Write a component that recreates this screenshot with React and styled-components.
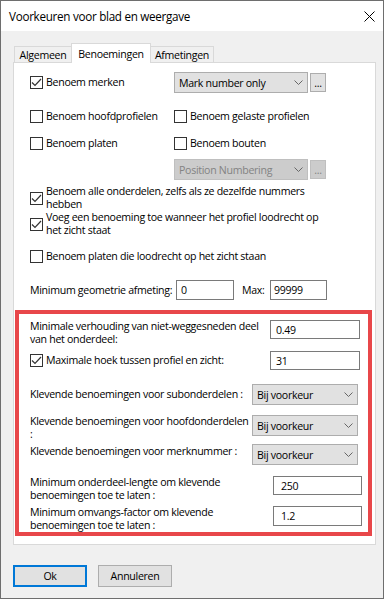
import React from 'react';
import styled, { createGlobalStyle } from 'styled-components';

const GlobalStyle = createGlobalStyle`
  body {
    margin: 0;
    background: #ffffff;
  }
`;

const Window = styled.div`
  width: 384px;
  height: 599px;
  box-sizing: border-box;
  border: 1px solid #6e6e6e;
  background: #f0f0f0;
  display: flex;
  flex-direction: column;
  font-family: "Open Sans", "Noto Sans", sans-serif;
  font-size: 10.6px;
  letter-spacing: -0.3px;
  color: #000000;
`;

const TitleBar = styled.div`
  flex: none;
  height: 30px;
  background: #ffffff;
  display: flex;
  align-items: center;
  justify-content: space-between;
  padding: 0 8px 0 8px;
`;

const Title = styled.span`
  font-size: 11.7px;
`;

const Body = styled.div`
  flex: 1;
  display: flex;
  flex-direction: column;
  padding: 12px 0 0 12px;
`;

const TabStrip = styled.div`
  display: flex;
  align-items: flex-end;
  height: 19px;
  padding-left: 1px;
`;

const Tab = styled.div`
  box-sizing: border-box;
  width: ${(p) => p.$w}px;
  height: ${(p) => (p.$active ? 20 : 16)}px;
  margin-left: ${(p) => (p.$first ? 0 : -1)}px;
  margin-bottom: ${(p) => (p.$active ? -1 : 0)}px;
  border: 1px solid #d9d9d9;
  border-bottom: none;
  background: ${(p) => (p.$active ? '#ffffff' : '#f0f0f0')};
  display: flex;
  align-items: center;
  justify-content: center;
  position: relative;
  z-index: ${(p) => (p.$active ? 2 : 1)};
`;

const Panel = styled.div`
  box-sizing: border-box;
  width: 363px;
  height: 483px;
  border: 1px solid #d9d9d9;
  background: #ffffff;
  display: flex;
  flex-direction: column;
  padding-top: 9px;
`;

const Section = styled.div`
  display: flex;
  flex-direction: column;
  padding-left: 16px;
`;

const Row = styled.div`
  display: flex;
  align-items: center;
  height: ${(p) => p.$h}px;
  margin-top: ${(p) => p.$mt || 0}px;
  padding-left: ${(p) => p.$indent || 0}px;
`;

const Check = styled.div`
  display: flex;
  align-items: center;
  gap: 3px;
  width: ${(p) => (p.$w ? `${p.$w}px` : 'auto')};
  flex: none;
  line-height: 13px;
`;

const Label = styled.div`
  flex: none;
  width: ${(p) => (p.$w ? `${p.$w}px` : 'auto')};
  line-height: 13px;
  margin-top: ${(p) => p.$mt || 0}px;
  margin-left: ${(p) => p.$ml || 0}px;
  white-space: nowrap;
`;

const Select = styled.div`
  box-sizing: border-box;
  flex: none;
  width: ${(p) => p.$w}px;
  height: 21px;
  border: 1px solid ${(p) => (p.$disabled ? '#bfbfbf' : '#adadad')};
  background: ${(p) => (p.$disabled ? '#cccccc' : '#e1e1e1')};
  color: ${(p) => (p.$disabled ? '#838383' : '#000000')};
  display: flex;
  align-items: center;
  justify-content: space-between;
  padding: 0 4px 0 4px;
`;

const Dots = styled.div`
  box-sizing: border-box;
  flex: none;
  width: 16px;
  height: 19px;
  margin-left: 2px;
  border: 1px solid ${(p) => (p.$disabled ? '#bfbfbf' : '#adadad')};
  background: ${(p) => (p.$disabled ? '#cccccc' : '#e1e1e1')};
  color: ${(p) => (p.$disabled ? '#838383' : '#000000')};
  display: flex;
  align-items: flex-end;
  justify-content: center;
  padding-bottom: 3px;
  line-height: 10px;
`;

const Input = styled.div`
  box-sizing: border-box;
  flex: none;
  width: ${(p) => p.$w}px;
  height: ${(p) => p.$h || 20}px;
  border: 1px solid #7a7a7a;
  background: #ffffff;
  display: flex;
  align-items: center;
  padding-left: ${(p) => p.$pl || 5}px;
`;

const RedBox = styled.div`
  box-sizing: border-box;
  width: 357px;
  height: 226px;
  margin: 10px 0 0 1px;
  border: 4px solid #e8474a;
  display: flex;
  flex-direction: column;
  padding-left: 11px;
`;

const RedRow = styled.div`
  display: flex;
  align-items: ${(p) => p.$align || 'flex-start'};
  justify-content: space-between;
  margin-top: ${(p) => p.$mt}px;
  padding-right: ${(p) => p.$pr}px;
`;

const ButtonRow = styled.div`
  display: flex;
  gap: 11px;
  margin-top: 20px;
`;

const Button = styled.div`
  box-sizing: border-box;
  width: 74px;
  height: 22px;
  border: ${(p) => (p.$default ? '2px solid #0078d7' : '1px solid #adadad')};
  background: #e1e1e1;
  display: flex;
  align-items: center;
  justify-content: center;
`;

const CloseIcon = () => (
  <svg width="11" height="11" viewBox="0 0 11 11">
    <path d="M0.5 0.5 L10.5 10.5 M10.5 0.5 L0.5 10.5" stroke="#000" strokeWidth="1" fill="none" />
  </svg>
);

const Chevron = () => (
  <svg width="9" height="5" viewBox="0 0 9 5">
    <polyline points="0.5,0.5 4.5,4.5 8.5,0.5" stroke="#666" strokeWidth="1" fill="none" />
  </svg>
);

const Box = ({ checked }) => (
  <svg width="13" height="13" viewBox="0 0 13 13" style={{ flex: 'none' }}>
    <rect x="0.5" y="0.5" width="12" height="12" fill="#fff" stroke="#333" />
    {checked && (
      <polyline points="2,6.5 5,9.5 11,3" stroke="#333" strokeWidth="1.2" fill="none" />
    )}
  </svg>
);

const CheckItem = ({ checked, w, children }) => (
  <Check $w={w}>
    <Box checked={checked} />
    <span>{children}</span>
  </Check>
);

const Dropdown = ({ w, disabled, children }) => (
  <Select $w={w} $disabled={disabled}>
    <span>{children}</span>
    <Chevron />
  </Select>
);

export default function App() {
  return (
    <>
      <GlobalStyle />
      <Window>
        <TitleBar>
          <Title>Voorkeuren voor blad en weergave</Title>
          <CloseIcon />
        </TitleBar>
        <Body>
          <TabStrip>
            <Tab $w={58} $first>Algemeen</Tab>
            <Tab $w={80} $active>Benoemingen</Tab>
            <Tab $w={64}>Afmetingen</Tab>
          </TabStrip>
          <Panel>
            <Section>
              <Row $h={21}>
                <CheckItem checked w={144}>Benoem merken</CheckItem>
                <Dropdown w={134}>Mark number only</Dropdown>
                <Dots>...</Dots>
              </Row>
              <Row $h={20} $mt={13}>
                <CheckItem w={144}>Benoem hoofdprofielen</CheckItem>
                <CheckItem>Benoem gelaste profielen</CheckItem>
              </Row>
              <Row $h={20} $mt={7}>
                <CheckItem w={144}>Benoem platen</CheckItem>
                <CheckItem>Benoem bouten</CheckItem>
              </Row>
              <Row $h={21} $mt={6} $indent={144}>
                <Dropdown w={134} disabled>Position Numbering</Dropdown>
                <Dots $disabled>...</Dots>
              </Row>
              <Row $h={26} $mt={5}>
                <CheckItem checked>
                  Benoem alle onderdelen, zelfs als ze dezelfde nummers
                  <br />
                  hebben
                </CheckItem>
              </Row>
              <Row $h={26}>
                <CheckItem checked>
                  Voeg een benoeming toe wanneer het profiel loodrecht op
                  <br />
                  het zicht staat
                </CheckItem>
              </Row>
              <Row $h={20} $mt={9}>
                <CheckItem>Benoem platen die loodrecht op het zicht staan</CheckItem>
              </Row>
              <Row $h={20} $mt={14}>
                <Label $w={146}>Minimum geometrie afmeting:</Label>
                <Input $w={58} $pl={4}>0</Input>
                <Label $w={28} $ml={8}>Max:</Label>
                <Input $w={57} $pl={3}>99999</Input>
              </Row>
            </Section>
            <RedBox>
              <RedRow $mt={6} $pr={8}>
                <Label>
                  Minimale verhouding van niet-weggesneden deel
                  <br />
                  van het onderdeel:
                </Label>
                <Input $w={90} $h={19}>0.49</Input>
              </RedRow>
              <RedRow $mt={5} $pr={8} $align="center">
                <CheckItem checked>Maximale hoek tussen profiel en zicht:</CheckItem>
                <Input $w={90} $h={19}>31</Input>
              </RedRow>
              <RedRow $mt={14} $pr={10} $align="center">
                <Label>Klevende benoemingen voor subonderdelen :</Label>
                <Dropdown w={106}>Bij voorkeur</Dropdown>
              </RedRow>
              <RedRow $mt={10} $pr={10}>
                <Label>
                  Klevende benoemingen voor hoofdonderdelen
                  <br />:
                </Label>
                <Dropdown w={106}>Bij voorkeur</Dropdown>
              </RedRow>
              <RedRow $mt={3} $pr={10}>
                <Label $mt={1}>Klevende benoemingen voor merknummer :</Label>
                <Dropdown w={106}>Bij voorkeur</Dropdown>
              </RedRow>
              <RedRow $mt={11} $pr={6}>
                <Label>
                  Minimum onderdeel-lengte om klevende
                  <br />
                  benoemingen toe te laten :
                </Label>
                <Input $w={89} $h={19} $pl={7}>250</Input>
              </RedRow>
              <RedRow $mt={4} $pr={6}>
                <Label>
                  Minimum omvangs-factor om klevende
                  <br />
                  benoemingen toe te laten :
                </Label>
                <Input $w={89} $h={20} $pl={7}>1.2</Input>
              </RedRow>
            </RedBox>
          </Panel>
          <ButtonRow>
            <Button $default>Ok</Button>
            <Button>Annuleren</Button>
          </ButtonRow>
        </Body>
      </Window>
    </>
  );
}
